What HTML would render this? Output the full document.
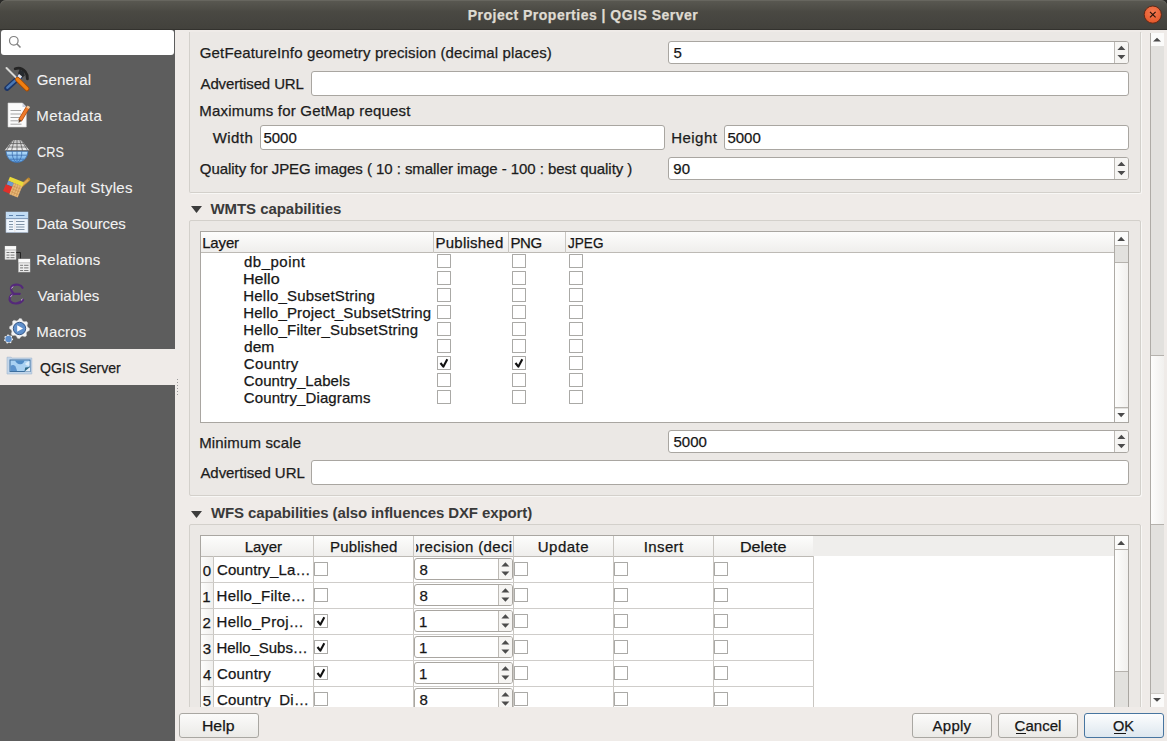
<!DOCTYPE html><html><head><meta charset="utf-8"><style>
*{box-sizing:border-box;margin:0;padding:0}
html,body{width:1167px;height:741px;overflow:hidden;background:#efebe8;font-family:"Liberation Sans",sans-serif;font-size:15px;color:#3c3c3c}
.a{position:absolute}
.t{position:absolute;white-space:nowrap;-webkit-text-stroke:0.25px currentColor}
svg{position:absolute;overflow:visible}
</style></head><body>
<div class="a" style="left:0px;top:0px;width:1167px;height:10px;background:#2a2a28"></div>
<div class="a" style="left:0px;top:0px;width:1167px;height:29px;background:linear-gradient(#5a5952,#4a4943 40%,#42413c);border-radius:6px 6px 0 0;box-shadow:inset 0 1px 0 #67665f"></div>
<div class="a" style="left:0px;top:29px;width:1167px;height:1px;background:#33322e"></div>
<div class="t" style="left:467.73px;top:7.03px;color:#dfdbd2;font-size:14px;line-height:16.09px;font-weight:bold;letter-spacing:0.493px;">Project Properties | QGIS Server</div>
<svg style="left:0;top:0" width="1167" height="30"><defs><radialGradient id="cg" cx="50%" cy="35%" r="65%"><stop offset="0" stop-color="#f47a52"/><stop offset="1" stop-color="#e5582a"/></radialGradient></defs><circle cx="1152.8" cy="14.6" r="8.6" fill="url(#cg)" stroke="#5a2412" stroke-width="0.9"/><path d="M1150 11.8 L1155.6 17.4 M1155.6 11.8 L1150 17.4" stroke="#2a140a" stroke-width="1.2"/></svg>
<div class="a" style="left:175px;top:30px;width:992px;height:711px;background:#efebe8"></div>
<div class="a" style="left:0px;top:30px;width:175px;height:711px;background:#5d5d5d"></div>
<div class="a" style="left:1px;top:30px;width:173px;height:25px;background:#fff;border-radius:3px"></div>
<svg style="left:0;top:0" width="40" height="60"><circle cx="13.8" cy="40.8" r="4.3" fill="none" stroke="#808080" stroke-width="1.2"/><path d="M16.8 43.8 L20.5 47.5" stroke="#808080" stroke-width="1.5"/></svg>
<div class="t" style="left:36.80px;top:71.42px;color:#f2f2f2;font-size:15px;line-height:17.23px;letter-spacing:0.138px;-webkit-text-stroke:0.1px currentColor;">General</div>
<div class="t" style="left:36.33px;top:107.42px;color:#f2f2f2;font-size:15px;line-height:17.23px;letter-spacing:0.434px;-webkit-text-stroke:0.1px currentColor;">Metadata</div>
<div class="t" style="left:36.80px;top:143.42px;color:#f2f2f2;font-size:15px;line-height:17.23px;transform:scaleX(0.8439);transform-origin:0.70px 0;-webkit-text-stroke:0.1px currentColor;">CRS</div>
<div class="t" style="left:36.33px;top:179.42px;color:#f2f2f2;font-size:15px;line-height:17.23px;letter-spacing:0.277px;-webkit-text-stroke:0.1px currentColor;">Default Styles</div>
<div class="t" style="left:36.33px;top:215.42px;color:#f2f2f2;font-size:15px;line-height:17.23px;letter-spacing:-0.140px;-webkit-text-stroke:0.1px currentColor;">Data Sources</div>
<div class="t" style="left:36.33px;top:251.42px;color:#f2f2f2;font-size:15px;line-height:17.23px;letter-spacing:0.188px;-webkit-text-stroke:0.1px currentColor;">Relations</div>
<div class="t" style="left:37.50px;top:287.42px;color:#f2f2f2;font-size:15px;line-height:17.23px;letter-spacing:0.056px;-webkit-text-stroke:0.1px currentColor;">Variables</div>
<div class="t" style="left:36.33px;top:323.42px;color:#f2f2f2;font-size:15px;line-height:17.23px;letter-spacing:0.133px;-webkit-text-stroke:0.1px currentColor;">Macros</div>
<div class="a" style="left:0px;top:349px;width:175px;height:36px;background:#efebe8"></div>
<div class="t" style="left:39.70px;top:359.22px;color:#1c1c1c;font-size:15px;line-height:17.23px;transform:scaleX(0.9403);transform-origin:0.70px 0;">QGIS Server</div>
<svg style="left:2px;top:64px" width="30" height="30" viewBox="0 0 30 30"><path d="M17.5 13 L5 24.2" stroke="#1b3568" stroke-width="5.4" stroke-linecap="round"/><path d="M16.8 13.4 L5.4 23.6" stroke="#4a78b4" stroke-width="2.6" stroke-linecap="round"/><path d="M13.2 4.8 C16.5 3.6 20.5 4.6 23.2 7.6 C24.8 9.6 25.6 12 25.4 14.8" fill="none" stroke="#242424" stroke-width="2.8" stroke-linecap="round"/><path d="M17.5 5.5 L21.5 7.2 L22.8 11.5 L20.5 13.5 L16 9.5Z" fill="#262a2e"/><path d="M16.2 11.2 L19.2 13.6" stroke="#e6e6ec" stroke-width="2.8" /><path d="M4.5 4 L15 14.5" stroke="#d9d9d6" stroke-width="2" stroke-linecap="round"/><path d="M15.5 15.5 L25 24.8" stroke="#a64a00" stroke-width="5" stroke-linecap="round"/><path d="M15.5 15.3 L24.8 24.6" stroke="#f07f10" stroke-width="3.4" stroke-linecap="round"/></svg>
<svg style="left:2px;top:100px" width="30" height="30" viewBox="0 0 30 30"><path d="M6 3 L20.5 3 L24.3 7 L24.3 27 L6 27Z" fill="#fbfbfb" stroke="#d0d0d0" stroke-width="0.6"/><path d="M20.5 3 L20.5 7 L24.3 7Z" fill="#c9cfe0"/><path d="M8.5 10.5 L19 10.5" stroke="#9a9a9a" stroke-width="0.9"/><path d="M8.5 14 L19 14" stroke="#9a9a9a" stroke-width="0.9"/><path d="M8.5 17.5 L19 17.5" stroke="#9a9a9a" stroke-width="0.9"/><path d="M8.5 20.8 L19 20.8" stroke="#9a9a9a" stroke-width="0.9"/><path d="M8.5 24.2 L19.5 24.2" stroke="#9a9a9a" stroke-width="0.9"/><path d="M18 20.5 L25.8 7.5" stroke="#a8480c" stroke-width="4.2" stroke-linecap="butt"/><path d="M18 20.5 L25.8 7.5" stroke="#ee7a2a" stroke-width="2.8"/><path d="M25 6.5 L27.5 8" stroke="#f1c79c" stroke-width="2.4"/><path d="M16.6 23 L17 19.2 L19.6 20.8Z" fill="#5a4030"/></svg>
<svg style="left:2px;top:136px" width="30" height="30" viewBox="0 0 30 30"><defs><linearGradient id="gg" x1="0" y1="0" x2="0" y2="1"><stop offset="0" stop-color="#bdbdbd"/><stop offset="1" stop-color="#f2f2f2"/></linearGradient><linearGradient id="gb" x1="0" y1="0" x2="0" y2="1"><stop offset="0" stop-color="#b6defc"/><stop offset="1" stop-color="#5c9fe0"/></linearGradient></defs><path d="M10.8 4 L19.4 4 L27.4 14.6 L2.6 14.6Z" fill="url(#gg)"/><path d="M4 15.3 A11 11.2 0 0 0 26 15.3Z" fill="url(#gb)" stroke="#3b6fae" stroke-width="0.8"/><path d="M7.9 7.5 L22.2 7.5 M5.3 11 L24.9 11 M2.8 14.7 L27.2 14.7 M15 4 L15 14.6 M12.2 4 L9.6 14.6 M17.9 4 L20.5 14.6 M10.8 4 L4.5 14.6 M19.4 4 L25.6 14.6" stroke="#5c5c5c" stroke-width="0.75"/><path d="M5 19.2 L25 19.2 M8 23.2 L22 23.2 M15 15.3 L15 26.4 M10.3 15.3 C9.8 20 11.5 24 14 26.2 M19.7 15.3 C20.2 20 18.5 24 16 26.2" stroke="#3d6fae" stroke-width="0.8" fill="none"/></svg>
<svg style="left:2px;top:173px" width="30" height="30" viewBox="0 0 30 30"><path d="M18 14 L26.5 6.5" stroke="#b9862f" stroke-width="3.6" stroke-linecap="round"/><path d="M18 14 L26.3 6.7" stroke="#e0a95a" stroke-width="2"/><g transform="rotate(22 12 15)"><rect x="4" y="6" width="15" height="4.5" fill="#e9d93a"/><rect x="4" y="10.5" width="6" height="4" fill="#6f9bd0"/><rect x="3" y="14.5" width="8" height="7.5" fill="#e0302a"/><rect x="10" y="10.5" width="9" height="12" fill="#e8b878"/><path d="M12 10.5 V22.5 M14.5 10.5 V22.5 M17 10.5 V22.5 M10 13.5 H19 M10 16.5 H19 M10 19.5 H19" stroke="#c99050" stroke-width="0.6"/></g></svg>
<svg style="left:2px;top:208px" width="30" height="30" viewBox="0 0 30 30"><rect x="4" y="4" width="22" height="20.5" fill="#eef5fd" stroke="#a9bdd6" stroke-width="0.6"/><rect x="4" y="4" width="22" height="6.5" fill="#c2dcf4"/><path d="M4 10.6 L26 10.6" stroke="#7b97b8" stroke-width="1"/><path d="M7 7.5 L11 7.5 M14 7.5 L22.5 7.5" stroke="#5c82ad" stroke-width="1.2"/><path d="M7 13.5 L11 13.5 M14 13.5 L22.5 13.5" stroke="#8194a8" stroke-width="1"/><path d="M7 16.5 L11 16.5 M14 16.5 L22.5 16.5" stroke="#8194a8" stroke-width="1"/><path d="M7 19 L11 19 M14 19 L22.5 19" stroke="#8194a8" stroke-width="1"/><path d="M7 21.5 L11 21.5 M14 21.5 L22.5 21.5" stroke="#8194a8" stroke-width="1"/><path d="M12.8 11 L12.8 24" stroke="#e6d8d0" stroke-width="0.6"/></svg>
<svg style="left:2px;top:244px" width="30" height="30" viewBox="0 0 30 30"><rect x="3" y="2.2" width="11" height="13.2" fill="#eeeeee" stroke="#c8c8c8" stroke-width="0.5"/><rect x="3" y="2.2" width="11" height="3.5" fill="#fafafa"/><path d="M3 6.0 L14 6.0" stroke="#9c9c9c" stroke-width="0.6"/><path d="M4.5 8.5 L7.5 8.5 M8.5 8.5 L12.5 8.5" stroke="#6a6a6a" stroke-width="0.9"/><path d="M4.5 11.1 L7.5 11.1 M8.5 11.1 L12.5 11.1" stroke="#6a6a6a" stroke-width="0.9"/><path d="M4.5 13.7 L7.5 13.7 M8.5 13.7 L12.5 13.7" stroke="#6a6a6a" stroke-width="0.9"/><path d="M14.2 8.5 L18.5 8.5 L18.5 14.6" fill="none" stroke="#1e1e1e" stroke-width="0.9"/><rect x="16.6" y="15" width="11.4" height="13" fill="#eeeeee" stroke="#c8c8c8" stroke-width="0.5"/><rect x="16.6" y="15" width="11.4" height="3.5" fill="#fafafa"/><path d="M16.6 18.8 L28.0 18.8" stroke="#9c9c9c" stroke-width="0.6"/><path d="M18.1 21.3 L21.1 21.3 M22.1 21.3 L26.5 21.3" stroke="#6a6a6a" stroke-width="0.9"/><path d="M18.1 23.900000000000002 L21.1 23.900000000000002 M22.1 23.900000000000002 L26.5 23.900000000000002" stroke="#6a6a6a" stroke-width="0.9"/><path d="M18.1 26.5 L21.1 26.5 M22.1 26.5 L26.5 26.5" stroke="#6a6a6a" stroke-width="0.9"/></svg>
<svg style="left:2px;top:280px" width="30" height="30" viewBox="0 0 30 30"><path d="M20.5 7.8 C19 4.5 14 3.8 11 5.5 C8 7.3 8.4 11.5 12 13.6 M12.5 13.8 L17.8 13.8 M12 13.6 C7.5 14.8 6.7 19 8.5 21.5 C11 24.5 18 24.2 21 20" fill="none" stroke="#54297a" stroke-width="2.2" stroke-linecap="round"/><path d="M12.5 13.8 L17.8 13.8" stroke="#54297a" stroke-width="0.9"/><path d="M9.3 8.3 L11.3 6.6 M8.3 16.8 L10.3 15.2 M19 20.3 L20.5 19" stroke="#d5b9e6" stroke-width="1"/></svg>
<svg style="left:2px;top:316px" width="30" height="30" viewBox="0 0 30 30"><path d="M27.50,12.50 L27.31,14.45 L25.08,15.64 L24.32,17.06 L24.57,19.57 L23.06,20.81 L20.64,20.08 L19.10,20.54 L17.50,22.50 L15.55,22.31 L14.36,20.08 L12.94,19.32 L10.43,19.57 L9.19,18.06 L9.92,15.64 L9.46,14.10 L7.50,12.50 L7.69,10.55 L9.92,9.36 L10.68,7.94 L10.43,5.43 L11.94,4.19 L14.36,4.92 L15.90,4.46 L17.50,2.50 L19.45,2.69 L20.64,4.92 L22.06,5.68 L24.57,5.43 L25.81,6.94 L25.08,9.36 L25.54,10.90Z" fill="#f3f3f3" stroke="#d0d0d0" stroke-width="0.5"/><circle cx="17.5" cy="12.5" r="6.2" fill="#5f8fcb" stroke="#2e4f7e" stroke-width="0.9"/><path d="M15.2 9.2 L15.2 15.8 L21 12.5Z" fill="#ffffff"/><path d="M11.10,23.00 L10.98,24.02 L9.83,24.61 L9.39,25.31 L9.37,26.60 L8.50,27.14 L7.32,26.61 L6.50,26.70 L5.48,27.48 L4.50,27.14 L4.19,25.89 L3.61,25.31 L2.36,25.00 L2.02,24.02 L2.80,23.00 L2.89,22.18 L2.36,21.00 L2.90,20.13 L4.19,20.11 L4.89,19.67 L5.48,18.52 L6.50,18.40 L7.32,19.39 L8.11,19.67 L9.37,19.40 L10.10,20.13 L9.83,21.39 L10.11,22.18Z" fill="#f0f0f0"/><circle cx="6.5" cy="23" r="3.2" fill="#5f8fcb"/></svg>
<svg style="left:2px;top:352px" width="30" height="30" viewBox="0 0 30 30"><path d="M5 5.2 L9.2 5.2 L9.8 6 L29.8 6 L29.8 22 L5 22Z" fill="#c3d6ea" stroke="#9fb6cf" stroke-width="0.6"/><rect x="8" y="8" width="20" height="11.5" fill="#a9d2f2" stroke="#3d6f9f" stroke-width="1"/><path d="M13 8.5 L22.5 8.5 C22 10.5 20.5 12.6 18 12.3 C16 12 14 11 13 8.5Z" fill="#4f8cc6"/><path d="M8.5 14 C10 12.5 12.5 12.8 13.5 14.5 C14.3 16 14.8 18 15 19 L8.5 19Z" fill="#5b93cc"/><path d="M23 12 C24.5 10 26 9.5 27.5 9 L27.5 14 C26 13.5 24.5 13.5 23 12Z" fill="#dbeefb"/><path d="M22.5 19.5 L28 15 L28 19.5Z" fill="#e4eef7"/><path d="M22.5 19.5 L28 15 L23.2 15.4Z" fill="#2f6a86"/></svg>
<div class="a" style="left:177px;top:379px;width:1px;height:1px;background:#9a9a9a"></div>
<div class="a" style="left:177px;top:382px;width:1px;height:1px;background:#9a9a9a"></div>
<div class="a" style="left:177px;top:385px;width:1px;height:1px;background:#9a9a9a"></div>
<div class="a" style="left:177px;top:388px;width:1px;height:1px;background:#9a9a9a"></div>
<div class="a" style="left:177px;top:391px;width:1px;height:1px;background:#9a9a9a"></div>
<div class="a" style="left:177px;top:394px;width:1px;height:1px;background:#9a9a9a"></div>
<div class="a" style="left:175px;top:30px;width:975px;height:677px;overflow:hidden">
<div class="a" style="left:14px;top:2px;width:952px;height:161px;background:#ebe8e5;border:1px solid #d3d0cb;border-top:none;border-radius:0 0 2px 2px;box-shadow:1px 1px 0 #f8f7f5"></div>
<div class="t" style="left:24.80px;top:14.22px;color:#1c1c1c;font-size:15px;line-height:17.23px;letter-spacing:0.139px;">GetFeatureInfo geometry precision (decimal places)</div>
<div class="a" style="left:493px;top:11px;width:461px;height:23px;background:#fff;border:1px solid #a9a6a1;border-radius:3px"></div>
<div class="a" style="left:939px;top:12px;width:1px;height:21px;background:#bdbab5"></div>
<div class="a" style="left:940px;top:12px;width:13px;height:21px;background:#f6f5f3;border-radius:0 2px 2px 0"></div>
<svg style="left:493px;top:11px" width="461" height="23"><path d="M449.4 9.1 L457.4 9.1 L453.4 4.8Z M449.4 13.9 L457.4 13.9 L453.4 18.2Z" fill="#4c4c4c"/></svg>
<div class="t" style="left:498.53px;top:14.42px;color:#161616;font-size:15px;line-height:17.23px;">5</div>
<div class="t" style="left:25.50px;top:44.92px;color:#1c1c1c;font-size:15px;line-height:17.23px;letter-spacing:-0.128px;">Advertised URL</div>
<div class="a" style="left:136px;top:41px;width:818px;height:25px;background:#fff;border:1px solid #a9a6a1;border-radius:3px"></div>
<div class="t" style="left:24.33px;top:72.42px;color:#1c1c1c;font-size:15px;line-height:17.23px;letter-spacing:0.201px;">Maximums for GetMap request</div>
<div class="t" style="left:37.70px;top:99.42px;color:#1c1c1c;font-size:15px;line-height:17.23px;letter-spacing:0.450px;">Width</div>
<div class="a" style="left:85px;top:95px;width:405px;height:25px;background:#fff;border:1px solid #a9a6a1;border-radius:3px"></div>
<div class="t" style="left:88.53px;top:99.42px;color:#161616;font-size:15px;line-height:17.23px;letter-spacing:-0.042px;">5000</div>
<div class="t" style="left:496.13px;top:99.42px;color:#1c1c1c;font-size:15px;line-height:17.23px;letter-spacing:0.492px;">Height</div>
<div class="a" style="left:549px;top:95px;width:405px;height:25px;background:#fff;border:1px solid #a9a6a1;border-radius:3px"></div>
<div class="t" style="left:552.53px;top:99.42px;color:#161616;font-size:15px;line-height:17.23px;letter-spacing:-0.042px;">5000</div>
<div class="t" style="left:24.80px;top:130.12px;color:#1c1c1c;font-size:15px;line-height:17.23px;letter-spacing:-0.053px;">Quality for JPEG images ( 10 : smaller image - 100 : best quality )</div>
<div class="a" style="left:493px;top:127px;width:461px;height:23px;background:#fff;border:1px solid #a9a6a1;border-radius:3px"></div>
<div class="a" style="left:939px;top:128px;width:1px;height:21px;background:#bdbab5"></div>
<div class="a" style="left:940px;top:128px;width:13px;height:21px;background:#f6f5f3;border-radius:0 2px 2px 0"></div>
<svg style="left:493px;top:127px" width="461" height="23"><path d="M449.4 9.1 L457.4 9.1 L453.4 4.8Z M449.4 13.9 L457.4 13.9 L453.4 18.2Z" fill="#4c4c4c"/></svg>
<div class="t" style="left:498.30px;top:130.42px;color:#161616;font-size:15px;line-height:17.23px;">90</div>
<svg style="left:15.599999999999994px;top:175.8px" width="12" height="8"><path d="M0 0 L11 0 L5.5 7Z" fill="#3c3c3c"/></svg>
<div class="t" style="left:35.40px;top:170.02px;color:#3a3a3a;font-size:15px;line-height:17.23px;font-weight:bold;letter-spacing:-0.049px;-webkit-text-stroke:0;">WMTS capabilities</div>
<div class="a" style="left:14px;top:190px;width:952px;height:276px;background:#ebe8e5;border:1px solid #d3d0cb;border-radius:2px;box-shadow:1px 1px 0 #f8f7f5"></div>
<div class="a" style="left:25px;top:201px;width:929px;height:192px;background:#fff;border:1px solid #a9a6a1"></div>
<div class="a" style="left:26px;top:202px;width:913px;height:21px;background:linear-gradient(#fdfdfc,#efeeec);border-bottom:1px solid #bdbab5"></div>
<div class="a" style="left:258px;top:202px;width:1px;height:21px;background:#c9c6c1"></div>
<div class="a" style="left:333px;top:202px;width:1px;height:21px;background:#c9c6c1"></div>
<div class="a" style="left:390px;top:202px;width:1px;height:21px;background:#c9c6c1"></div>
<div class="t" style="left:27.13px;top:204.32px;color:#161616;font-size:15px;line-height:17.23px;letter-spacing:-0.144px;">Layer</div>
<div class="t" style="left:260.53px;top:204.32px;color:#161616;font-size:15px;line-height:17.23px;letter-spacing:0.229px;">Published</div>
<div class="t" style="left:335.43px;top:204.32px;color:#161616;font-size:15px;line-height:17.23px;letter-spacing:-0.406px;">PNG</div>
<div class="t" style="left:392.77px;top:204.32px;color:#161616;font-size:15px;line-height:17.23px;transform:scaleX(0.9042);transform-origin:0.23px 0;">JPEG</div>
<div class="t" style="left:69.03px;top:223.12px;color:#161616;font-size:15px;line-height:17.23px;letter-spacing:0.481px;">db_point</div>
<div class="a" style="left:262px;top:224px;width:14px;height:14px;background:#fff;border:1px solid #aaa9a6;border-radius:0.5px"></div>
<div class="a" style="left:337px;top:224px;width:14px;height:14px;background:#fff;border:1px solid #aaa9a6;border-radius:0.5px"></div>
<div class="a" style="left:394px;top:224px;width:14px;height:14px;background:#fff;border:1px solid #aaa9a6;border-radius:0.5px"></div>
<div class="t" style="left:68.33px;top:240.12px;color:#161616;font-size:15px;line-height:17.23px;transform:scaleX(1.0740);transform-origin:1.17px 0;">Hello</div>
<div class="a" style="left:262px;top:241px;width:14px;height:14px;background:#fff;border:1px solid #aaa9a6;border-radius:0.5px"></div>
<div class="a" style="left:337px;top:241px;width:14px;height:14px;background:#fff;border:1px solid #aaa9a6;border-radius:0.5px"></div>
<div class="a" style="left:394px;top:241px;width:14px;height:14px;background:#fff;border:1px solid #aaa9a6;border-radius:0.5px"></div>
<div class="t" style="left:68.33px;top:257.12px;color:#161616;font-size:15px;line-height:17.23px;letter-spacing:0.183px;">Hello_SubsetString</div>
<div class="a" style="left:262px;top:258px;width:14px;height:14px;background:#fff;border:1px solid #aaa9a6;border-radius:0.5px"></div>
<div class="a" style="left:337px;top:258px;width:14px;height:14px;background:#fff;border:1px solid #aaa9a6;border-radius:0.5px"></div>
<div class="a" style="left:394px;top:258px;width:14px;height:14px;background:#fff;border:1px solid #aaa9a6;border-radius:0.5px"></div>
<div class="t" style="left:68.33px;top:274.12px;color:#161616;font-size:15px;line-height:17.23px;letter-spacing:0.175px;">Hello_Project_SubsetString</div>
<div class="a" style="left:262px;top:275px;width:14px;height:14px;background:#fff;border:1px solid #aaa9a6;border-radius:0.5px"></div>
<div class="a" style="left:337px;top:275px;width:14px;height:14px;background:#fff;border:1px solid #aaa9a6;border-radius:0.5px"></div>
<div class="a" style="left:394px;top:275px;width:14px;height:14px;background:#fff;border:1px solid #aaa9a6;border-radius:0.5px"></div>
<div class="t" style="left:68.33px;top:291.12px;color:#161616;font-size:15px;line-height:17.23px;letter-spacing:0.197px;">Hello_Filter_SubsetString</div>
<div class="a" style="left:262px;top:292px;width:14px;height:14px;background:#fff;border:1px solid #aaa9a6;border-radius:0.5px"></div>
<div class="a" style="left:337px;top:292px;width:14px;height:14px;background:#fff;border:1px solid #aaa9a6;border-radius:0.5px"></div>
<div class="a" style="left:394px;top:292px;width:14px;height:14px;background:#fff;border:1px solid #aaa9a6;border-radius:0.5px"></div>
<div class="t" style="left:69.03px;top:308.12px;color:#161616;font-size:15px;line-height:17.23px;transform:scaleX(1.0381);transform-origin:0.47px 0;">dem</div>
<div class="a" style="left:262px;top:309px;width:14px;height:14px;background:#fff;border:1px solid #aaa9a6;border-radius:0.5px"></div>
<div class="a" style="left:337px;top:309px;width:14px;height:14px;background:#fff;border:1px solid #aaa9a6;border-radius:0.5px"></div>
<div class="a" style="left:394px;top:309px;width:14px;height:14px;background:#fff;border:1px solid #aaa9a6;border-radius:0.5px"></div>
<div class="t" style="left:68.80px;top:325.12px;color:#161616;font-size:15px;line-height:17.23px;letter-spacing:0.330px;">Country</div>
<div class="a" style="left:262px;top:326px;width:14px;height:14px;background:#fff;border:1px solid #aaa9a6;border-radius:0.5px"></div>
<svg style="left:262px;top:326px" width="14" height="14"><path d="M3.5 7 L6.3 10.7 L10.3 3.2" fill="none" stroke="#111" stroke-width="2.1" stroke-linejoin="round"/></svg>
<div class="a" style="left:337px;top:326px;width:14px;height:14px;background:#fff;border:1px solid #aaa9a6;border-radius:0.5px"></div>
<svg style="left:337px;top:326px" width="14" height="14"><path d="M3.5 7 L6.3 10.7 L10.3 3.2" fill="none" stroke="#111" stroke-width="2.1" stroke-linejoin="round"/></svg>
<div class="a" style="left:394px;top:326px;width:14px;height:14px;background:#fff;border:1px solid #aaa9a6;border-radius:0.5px"></div>
<div class="t" style="left:68.80px;top:342.12px;color:#161616;font-size:15px;line-height:17.23px;letter-spacing:0.085px;">Country_Labels</div>
<div class="a" style="left:262px;top:343px;width:14px;height:14px;background:#fff;border:1px solid #aaa9a6;border-radius:0.5px"></div>
<div class="a" style="left:337px;top:343px;width:14px;height:14px;background:#fff;border:1px solid #aaa9a6;border-radius:0.5px"></div>
<div class="a" style="left:394px;top:343px;width:14px;height:14px;background:#fff;border:1px solid #aaa9a6;border-radius:0.5px"></div>
<div class="t" style="left:68.80px;top:359.12px;color:#161616;font-size:15px;line-height:17.23px;letter-spacing:0.108px;">Country_Diagrams</div>
<div class="a" style="left:262px;top:360px;width:14px;height:14px;background:#fff;border:1px solid #aaa9a6;border-radius:0.5px"></div>
<div class="a" style="left:337px;top:360px;width:14px;height:14px;background:#fff;border:1px solid #aaa9a6;border-radius:0.5px"></div>
<div class="a" style="left:394px;top:360px;width:14px;height:14px;background:#fff;border:1px solid #aaa9a6;border-radius:0.5px"></div>
<div class="a" style="left:939px;top:202px;width:14px;height:190px;background:#e2e1de;border-left:1px solid #aeaba6"></div>
<div class="a" style="left:940px;top:202px;width:13px;height:13px;background:#fbfbfa"></div>
<div class="a" style="left:940px;top:215px;width:13px;height:1px;background:#c0bdb8"></div>
<div class="a" style="left:940px;top:232px;width:13px;height:146px;background:linear-gradient(90deg,#fdfdfc,#f1f0ee);border-top:1px solid #b5b2ad;border-bottom:1px solid #b5b2ad"></div>
<div class="a" style="left:940px;top:379px;width:13px;height:13px;background:#fbfbfa"></div>
<svg style="left:939px;top:202px" width="14" height="190"><path d="M3.3 9 L11 9 L7.15 4.8Z M3.3 181 L11 181 L7.15 185.2Z" fill="#4a4a4a"/></svg>
<div class="t" style="left:24.23px;top:403.82px;color:#1c1c1c;font-size:15px;line-height:17.23px;letter-spacing:0.147px;">Minimum scale</div>
<div class="a" style="left:493px;top:400px;width:461px;height:23px;background:#fff;border:1px solid #a9a6a1;border-radius:3px"></div>
<div class="a" style="left:939px;top:401px;width:1px;height:21px;background:#bdbab5"></div>
<div class="a" style="left:940px;top:401px;width:13px;height:21px;background:#f6f5f3;border-radius:0 2px 2px 0"></div>
<svg style="left:493px;top:400px" width="461" height="23"><path d="M449.4 9.1 L457.4 9.1 L453.4 4.8Z M449.4 13.9 L457.4 13.9 L453.4 18.2Z" fill="#4c4c4c"/></svg>
<div class="t" style="left:498.53px;top:403.42px;color:#161616;font-size:15px;line-height:17.23px;">5000</div>
<div class="t" style="left:25.40px;top:433.82px;color:#1c1c1c;font-size:15px;line-height:17.23px;letter-spacing:-0.052px;">Advertised URL</div>
<div class="a" style="left:136px;top:430px;width:818px;height:25px;background:#fff;border:1px solid #a9a6a1;border-radius:3px"></div>
<svg style="left:16px;top:480.5px" width="12" height="8"><path d="M0 0 L11 0 L5.5 7Z" fill="#3c3c3c"/></svg>
<div class="t" style="left:36.00px;top:473.72px;color:#3a3a3a;font-size:15px;line-height:17.23px;font-weight:bold;letter-spacing:-0.108px;-webkit-text-stroke:0;">WFS capabilities (also influences DXF export)</div>
<div class="a" style="left:14px;top:494px;width:952px;height:300px;background:#ebe8e5;border:1px solid #d3d0cb;border-radius:2px;box-shadow:1px 1px 0 #f8f7f5"></div>
<div class="a" style="left:25px;top:505px;width:929px;height:300px;background:#fff;border:1px solid #a9a6a1"></div>
<div class="a" style="left:26px;top:506px;width:913px;height:20px;background:#efeeec"></div>
<div class="a" style="left:26px;top:506px;width:612px;height:20px;background:linear-gradient(#fdfdfc,#efeeec)"></div>
<div class="a" style="left:26px;top:526px;width:612px;height:1px;background:#bdbab5"></div>
<div class="a" style="left:26px;top:527px;width:13px;height:300px;background:linear-gradient(90deg,#fdfdfc,#efeeec)"></div>
<div class="a" style="left:38px;top:526px;width:1px;height:300px;background:#c9c6c1"></div>
<div class="a" style="left:638px;top:526px;width:1px;height:300px;background:#c9c6c1"></div>
<div class="a" style="left:138px;top:506px;width:1px;height:300px;background:#c9c6c1"></div>
<div class="a" style="left:238px;top:506px;width:1px;height:300px;background:#c9c6c1"></div>
<div class="a" style="left:338px;top:506px;width:1px;height:300px;background:#c9c6c1"></div>
<div class="a" style="left:438px;top:506px;width:1px;height:300px;background:#c9c6c1"></div>
<div class="a" style="left:538px;top:506px;width:1px;height:300px;background:#c9c6c1"></div>
<div class="t" style="left:69.83px;top:507.82px;color:#161616;font-size:15px;line-height:17.23px;letter-spacing:-0.094px;">Layer</div>
<div class="t" style="left:154.93px;top:507.82px;color:#161616;font-size:15px;line-height:17.23px;letter-spacing:0.204px;">Published</div>
<div class="a" style="left:241px;top:506px;width:95.5px;height:20px;overflow:hidden">
<div class="t" style="left:-5.44px;top:1.82px;color:#161616;font-size:15px;line-height:17.23px;letter-spacing:0.35px;">precision (decimal places)</div>
</div>
<div class="t" style="left:362.76px;top:507.82px;color:#161616;font-size:15px;line-height:17.23px;letter-spacing:0.495px;">Update</div>
<div class="t" style="left:468.83px;top:507.82px;color:#161616;font-size:15px;line-height:17.23px;letter-spacing:0.361px;">Insert</div>
<div class="t" style="left:565.33px;top:507.82px;color:#161616;font-size:15px;line-height:17.23px;transform:scaleX(1.0750);transform-origin:1.17px 0;">Delete</div>
<div class="a" style="left:39px;top:552px;width:600px;height:1px;background:#cfcdca"></div>
<div class="a" style="left:26px;top:552px;width:13px;height:1px;background:#cfcdca"></div>
<div class="t" style="left:27.83px;top:532.02px;color:#161616;font-size:15px;line-height:17.23px;">0</div>
<div class="t" style="left:42.00px;top:531.22px;color:#161616;font-size:15px;line-height:17.23px;letter-spacing:0.083px;">Country_La…</div>
<div class="a" style="left:139px;top:532px;width:14px;height:14px;background:#fff;border:1px solid #aaa9a6;border-radius:0.5px"></div>
<div class="a" style="left:239px;top:528px;width:99px;height:22px;background:#fff;border:1px solid #a9a6a1;border-radius:3px"></div>
<div class="a" style="left:323px;top:529px;width:1px;height:20px;background:#bdbab5"></div>
<div class="a" style="left:324px;top:529px;width:13px;height:20px;background:#f6f5f3;border-radius:0 2px 2px 0"></div>
<svg style="left:239px;top:528px" width="99" height="22"><path d="M87.4 8.6 L95.4 8.6 L91.4 4.3Z M87.4 13.4 L95.4 13.4 L91.4 17.7Z" fill="#4c4c4c"/></svg>
<div class="t" style="left:244.53px;top:531.42px;color:#161616;font-size:15px;line-height:17.23px;">8</div>
<div class="a" style="left:339px;top:532px;width:14px;height:14px;background:#fff;border:1px solid #aaa9a6;border-radius:0.5px"></div>
<div class="a" style="left:439px;top:532px;width:14px;height:14px;background:#fff;border:1px solid #aaa9a6;border-radius:0.5px"></div>
<div class="a" style="left:539px;top:532px;width:14px;height:14px;background:#fff;border:1px solid #aaa9a6;border-radius:0.5px"></div>
<div class="a" style="left:39px;top:578px;width:600px;height:1px;background:#cfcdca"></div>
<div class="a" style="left:26px;top:578px;width:13px;height:1px;background:#cfcdca"></div>
<div class="t" style="left:27.36px;top:558.02px;color:#161616;font-size:15px;line-height:17.23px;">1</div>
<div class="t" style="left:41.53px;top:557.22px;color:#161616;font-size:15px;line-height:17.23px;letter-spacing:0.317px;">Hello_Filte…</div>
<div class="a" style="left:139px;top:558px;width:14px;height:14px;background:#fff;border:1px solid #aaa9a6;border-radius:0.5px"></div>
<div class="a" style="left:239px;top:554px;width:99px;height:22px;background:#fff;border:1px solid #a9a6a1;border-radius:3px"></div>
<div class="a" style="left:323px;top:555px;width:1px;height:20px;background:#bdbab5"></div>
<div class="a" style="left:324px;top:555px;width:13px;height:20px;background:#f6f5f3;border-radius:0 2px 2px 0"></div>
<svg style="left:239px;top:554px" width="99" height="22"><path d="M87.4 8.6 L95.4 8.6 L91.4 4.3Z M87.4 13.4 L95.4 13.4 L91.4 17.7Z" fill="#4c4c4c"/></svg>
<div class="t" style="left:244.53px;top:557.42px;color:#161616;font-size:15px;line-height:17.23px;">8</div>
<div class="a" style="left:339px;top:558px;width:14px;height:14px;background:#fff;border:1px solid #aaa9a6;border-radius:0.5px"></div>
<div class="a" style="left:439px;top:558px;width:14px;height:14px;background:#fff;border:1px solid #aaa9a6;border-radius:0.5px"></div>
<div class="a" style="left:539px;top:558px;width:14px;height:14px;background:#fff;border:1px solid #aaa9a6;border-radius:0.5px"></div>
<div class="a" style="left:39px;top:604px;width:600px;height:1px;background:#cfcdca"></div>
<div class="a" style="left:26px;top:604px;width:13px;height:1px;background:#cfcdca"></div>
<div class="t" style="left:27.60px;top:584.02px;color:#161616;font-size:15px;line-height:17.23px;">2</div>
<div class="t" style="left:41.53px;top:583.22px;color:#161616;font-size:15px;line-height:17.23px;letter-spacing:0.305px;">Hello_Proj…</div>
<div class="a" style="left:139px;top:584px;width:14px;height:14px;background:#fff;border:1px solid #aaa9a6;border-radius:0.5px"></div>
<svg style="left:139px;top:584px" width="14" height="14"><path d="M3.5 7 L6.3 10.7 L10.3 3.2" fill="none" stroke="#111" stroke-width="2.1" stroke-linejoin="round"/></svg>
<div class="a" style="left:239px;top:580px;width:99px;height:22px;background:#fff;border:1px solid #a9a6a1;border-radius:3px"></div>
<div class="a" style="left:323px;top:581px;width:1px;height:20px;background:#bdbab5"></div>
<div class="a" style="left:324px;top:581px;width:13px;height:20px;background:#f6f5f3;border-radius:0 2px 2px 0"></div>
<svg style="left:239px;top:580px" width="99" height="22"><path d="M87.4 8.6 L95.4 8.6 L91.4 4.3Z M87.4 13.4 L95.4 13.4 L91.4 17.7Z" fill="#4c4c4c"/></svg>
<div class="t" style="left:244.06px;top:583.42px;color:#161616;font-size:15px;line-height:17.23px;">1</div>
<div class="a" style="left:339px;top:584px;width:14px;height:14px;background:#fff;border:1px solid #aaa9a6;border-radius:0.5px"></div>
<div class="a" style="left:439px;top:584px;width:14px;height:14px;background:#fff;border:1px solid #aaa9a6;border-radius:0.5px"></div>
<div class="a" style="left:539px;top:584px;width:14px;height:14px;background:#fff;border:1px solid #aaa9a6;border-radius:0.5px"></div>
<div class="a" style="left:39px;top:630px;width:600px;height:1px;background:#cfcdca"></div>
<div class="a" style="left:26px;top:630px;width:13px;height:1px;background:#cfcdca"></div>
<div class="t" style="left:27.83px;top:610.02px;color:#161616;font-size:15px;line-height:17.23px;">3</div>
<div class="t" style="left:41.53px;top:609.22px;color:#161616;font-size:15px;line-height:17.23px;letter-spacing:-0.037px;">Hello_Subs…</div>
<div class="a" style="left:139px;top:610px;width:14px;height:14px;background:#fff;border:1px solid #aaa9a6;border-radius:0.5px"></div>
<svg style="left:139px;top:610px" width="14" height="14"><path d="M3.5 7 L6.3 10.7 L10.3 3.2" fill="none" stroke="#111" stroke-width="2.1" stroke-linejoin="round"/></svg>
<div class="a" style="left:239px;top:606px;width:99px;height:22px;background:#fff;border:1px solid #a9a6a1;border-radius:3px"></div>
<div class="a" style="left:323px;top:607px;width:1px;height:20px;background:#bdbab5"></div>
<div class="a" style="left:324px;top:607px;width:13px;height:20px;background:#f6f5f3;border-radius:0 2px 2px 0"></div>
<svg style="left:239px;top:606px" width="99" height="22"><path d="M87.4 8.6 L95.4 8.6 L91.4 4.3Z M87.4 13.4 L95.4 13.4 L91.4 17.7Z" fill="#4c4c4c"/></svg>
<div class="t" style="left:244.06px;top:609.42px;color:#161616;font-size:15px;line-height:17.23px;">1</div>
<div class="a" style="left:339px;top:610px;width:14px;height:14px;background:#fff;border:1px solid #aaa9a6;border-radius:0.5px"></div>
<div class="a" style="left:439px;top:610px;width:14px;height:14px;background:#fff;border:1px solid #aaa9a6;border-radius:0.5px"></div>
<div class="a" style="left:539px;top:610px;width:14px;height:14px;background:#fff;border:1px solid #aaa9a6;border-radius:0.5px"></div>
<div class="a" style="left:39px;top:656px;width:600px;height:1px;background:#cfcdca"></div>
<div class="a" style="left:26px;top:656px;width:13px;height:1px;background:#cfcdca"></div>
<div class="t" style="left:28.07px;top:636.02px;color:#161616;font-size:15px;line-height:17.23px;">4</div>
<div class="t" style="left:42.00px;top:635.22px;color:#161616;font-size:15px;line-height:17.23px;letter-spacing:0.197px;">Country</div>
<div class="a" style="left:139px;top:636px;width:14px;height:14px;background:#fff;border:1px solid #aaa9a6;border-radius:0.5px"></div>
<svg style="left:139px;top:636px" width="14" height="14"><path d="M3.5 7 L6.3 10.7 L10.3 3.2" fill="none" stroke="#111" stroke-width="2.1" stroke-linejoin="round"/></svg>
<div class="a" style="left:239px;top:632px;width:99px;height:22px;background:#fff;border:1px solid #a9a6a1;border-radius:3px"></div>
<div class="a" style="left:323px;top:633px;width:1px;height:20px;background:#bdbab5"></div>
<div class="a" style="left:324px;top:633px;width:13px;height:20px;background:#f6f5f3;border-radius:0 2px 2px 0"></div>
<svg style="left:239px;top:632px" width="99" height="22"><path d="M87.4 8.6 L95.4 8.6 L91.4 4.3Z M87.4 13.4 L95.4 13.4 L91.4 17.7Z" fill="#4c4c4c"/></svg>
<div class="t" style="left:244.06px;top:635.42px;color:#161616;font-size:15px;line-height:17.23px;">1</div>
<div class="a" style="left:339px;top:636px;width:14px;height:14px;background:#fff;border:1px solid #aaa9a6;border-radius:0.5px"></div>
<div class="a" style="left:439px;top:636px;width:14px;height:14px;background:#fff;border:1px solid #aaa9a6;border-radius:0.5px"></div>
<div class="a" style="left:539px;top:636px;width:14px;height:14px;background:#fff;border:1px solid #aaa9a6;border-radius:0.5px"></div>
<div class="a" style="left:39px;top:682px;width:600px;height:1px;background:#cfcdca"></div>
<div class="a" style="left:26px;top:682px;width:13px;height:1px;background:#cfcdca"></div>
<div class="t" style="left:27.83px;top:662.02px;color:#161616;font-size:15px;line-height:17.23px;">5</div>
<div class="t" style="left:42.00px;top:661.22px;color:#161616;font-size:15px;line-height:17.23px;letter-spacing:0.185px;">Country_Di…</div>
<div class="a" style="left:139px;top:662px;width:14px;height:14px;background:#fff;border:1px solid #aaa9a6;border-radius:0.5px"></div>
<div class="a" style="left:239px;top:658px;width:99px;height:22px;background:#fff;border:1px solid #a9a6a1;border-radius:3px"></div>
<div class="a" style="left:323px;top:659px;width:1px;height:20px;background:#bdbab5"></div>
<div class="a" style="left:324px;top:659px;width:13px;height:20px;background:#f6f5f3;border-radius:0 2px 2px 0"></div>
<svg style="left:239px;top:658px" width="99" height="22"><path d="M87.4 8.6 L95.4 8.6 L91.4 4.3Z M87.4 13.4 L95.4 13.4 L91.4 17.7Z" fill="#4c4c4c"/></svg>
<div class="t" style="left:244.53px;top:661.42px;color:#161616;font-size:15px;line-height:17.23px;">8</div>
<div class="a" style="left:339px;top:662px;width:14px;height:14px;background:#fff;border:1px solid #aaa9a6;border-radius:0.5px"></div>
<div class="a" style="left:439px;top:662px;width:14px;height:14px;background:#fff;border:1px solid #aaa9a6;border-radius:0.5px"></div>
<div class="a" style="left:539px;top:662px;width:14px;height:14px;background:#fff;border:1px solid #aaa9a6;border-radius:0.5px"></div>
<div class="a" style="left:939px;top:506px;width:14px;height:180px;background:#e2e1de;border-left:1px solid #aeaba6"></div>
<div class="a" style="left:940px;top:506px;width:13px;height:13px;background:#fbfbfa"></div>
<div class="a" style="left:940px;top:519px;width:13px;height:123px;background:linear-gradient(90deg,#fdfdfc,#f1f0ee);border-top:1px solid #b5b2ad;border-bottom:1px solid #b5b2ad"></div>
<svg style="left:939px;top:506px" width="14" height="20"><path d="M3.3 9 L11 9 L7.15 4.8Z" fill="#4a4a4a"/></svg>
</div>
<div class="a" style="left:1150px;top:33px;width:14px;height:674px;background:#e2e1de;border-left:1px solid #aeaba6"></div>
<div class="a" style="left:1151px;top:33px;width:13px;height:13px;background:#fbfbfa"></div>
<div class="a" style="left:1151px;top:355px;width:13px;height:170px;background:linear-gradient(90deg,#fdfdfc,#f1f0ee);border-top:1px solid #b5b2ad;border-bottom:1px solid #b5b2ad"></div>
<div class="a" style="left:1151px;top:693px;width:13px;height:14px;background:#fbfbfa;border-top:1px solid #cfccc7"></div>
<svg style="left:1150px;top:30px" width="14" height="680"><path d="M3 11.6 L11 11.6 L7 7.7Z M3 668 L11 668 L7 671.8Z" fill="#4a4a4a"/></svg>
<div class="a" style="left:179px;top:713px;width:80px;height:25px;border:1px solid #a9a7a2;background:linear-gradient(#fbfbfa,#ebeae7);border-radius:3px"></div>
<div class="t" style="left:202.33px;top:717.22px;color:#161616;font-size:15px;line-height:17.23px;transform:scaleX(1.0561);transform-origin:1.17px 0;">Help</div>
<div class="a" style="left:912px;top:713px;width:80px;height:25px;border:1px solid #a9a7a2;background:linear-gradient(#fbfbfa,#ebeae7);border-radius:3px"></div>
<div class="t" style="left:932.60px;top:717.22px;color:#161616;font-size:15px;line-height:17.23px;letter-spacing:0.220px;">Apply</div>
<div class="a" style="left:998px;top:713px;width:80px;height:25px;border:1px solid #a9a7a2;background:linear-gradient(#fbfbfa,#ebeae7);border-radius:3px"></div>
<div class="t" style="left:1014.60px;top:717.22px;color:#161616;font-size:15px;line-height:17.23px;letter-spacing:0.020px;">Cancel</div>
<div class="a" style="left:1015.5px;top:733px;width:10px;height:1px;background:#161616"></div>
<div class="a" style="left:1084px;top:713px;width:80px;height:25px;border:1px solid #4775a0;background:linear-gradient(#fcfdfe,#dde7ef);border-radius:3px"></div>
<div class="t" style="left:1113.00px;top:717.22px;color:#161616;font-size:15px;line-height:17.23px;transform:scaleX(0.9708);transform-origin:0.70px 0;">OK</div>
<div class="a" style="left:1113.5px;top:733px;width:12px;height:1px;background:#161616"></div>
</body></html>
